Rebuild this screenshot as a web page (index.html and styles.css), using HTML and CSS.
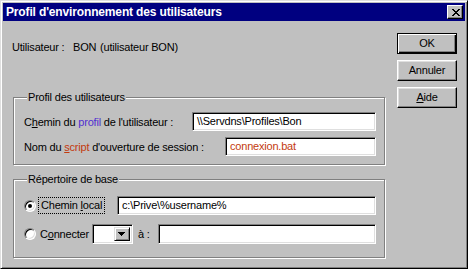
FILE: index.html
```html
<!DOCTYPE html>
<html>
<head>
    <title>Profil d'environnement des utilisateurs</title>
    <link rel="stylesheet" href="styles.css">
</head>
<body>
    <div class="dialog">
        <!-- Title bar -->
        <div class="titlebar">
            <span class="title">Profil d'environnement des utilisateurs</span>
            <span class="close-btn">
                <svg width="8" height="7" viewBox="0 0 8 7" shape-rendering="crispEdges"><path d="M0 0h2v1H0z M6 0h2v1H6z M1 1h2v1H1z M5 1h2v1H5z M2 2h4v1H2z M3 3h2v1H3z M2 4h4v1H2z M1 5h2v1H1z M5 5h2v1H5z M0 6h2v1H0z M6 6h2v1H6z" fill="#000"/></svg>
            </span>
        </div>

        <div class="body">
            <div class="main">
                <div class="user-line">
                    <span class="user-label">Utilisateur :</span>
                    <span class="user-name">BON</span>
                    <span>(utilisateur BON)</span>
                </div>

                <!-- Profile group -->
                <div class="group profile-group">
                    <div class="group-title">Profil des utilisateurs</div>
                    <div class="row first-row">
                        <span>C<u>h</u>emin du <span class="blue">profil</span> de l'utilisateur :</span>
                        <div class="field path-field">\\Servdns\Profiles\Bon</div>
                    </div>
                    <div class="row second-row">
                        <span>Nom du <span class="red"><u>s</u>cript</span> d'ouverture de session :</span>
                        <div class="field script-field red">connexion.bat</div>
                    </div>
                </div>

                <!-- Home directory group -->
                <div class="group home-group">
                    <div class="group-title">Répertoire de base</div>
                    <div class="row first-row">
                        <span class="radio checked"></span>
                        <span class="focus-label">Chemin <u>l</u>ocal</span>
                        <div class="field local-field">c:\Prive\%username%</div>
                    </div>
                    <div class="row second-row">
                        <span class="radio"></span>
                        <span class="radio-label">C<u>o</u>nnecter</span>
                        <div class="combo">
                            <span class="combo-btn">
                                <svg width="7" height="4" viewBox="0 0 7 4" shape-rendering="crispEdges"><path d="M0 0h7v1H0z M1 1h5v1H1z M2 2h3v1H2z M3 3h1v1H3z" fill="#000"/></svg>
                            </span>
                        </div>
                        <span class="to-label">à :</span>
                        <div class="field connect-field"></div>
                    </div>
                </div>
            </div>

            <div class="buttons">
                <div class="btn btn-default">OK</div>
                <div class="btn">Annuler</div>
                <div class="btn"><u>A</u>ide</div>
            </div>
        </div>
    </div>
</body>
</html>
```

FILE: styles.css
```css
body {
    margin: 0;
    background: #c0c0c0;
    font-family: "Liberation Sans", Arial, sans-serif;
    font-size: 11px;
    letter-spacing: -0.2px;
    color: #000;
}
.dialog {
    width: 468px;
    height: 269px;
    box-sizing: border-box;
    background: #c0c0c0;
    border: 1px solid;
    border-color: #dfdfdf #000 #000 #dfdfdf;
    box-shadow: inset 1px 1px #fff, inset -1px -1px #808080;
    padding: 2px;
}
.titlebar {
    height: 18px;
    background: #000080;
    display: flex;
    align-items: center;
    justify-content: space-between;
    padding: 0 2px 0 3px;
}
.title {
    color: #fff;
    font-weight: bold;
    font-size: 12px;
    letter-spacing: -0.15px;
}
.close-btn {
    width: 16px;
    height: 14px;
    box-sizing: border-box;
    background: #c0c0c0;
    border: 1px solid;
    border-color: #fff #000 #000 #fff;
    box-shadow: inset -1px -1px #808080;
    display: flex;
    align-items: center;
    justify-content: center;
    padding-left: 1px;
}
.body {
    display: flex;
}
.main {
    margin-left: 10px;
    width: 372px;
}
.user-line {
    margin: 20px 0 0 -1px;
    height: 13px;
    line-height: 13px;
    display: flex;
}
.user-label {
    width: 61px;
}
.user-name {
    width: 27px;
}
.group {
    box-sizing: border-box;
    width: 372px;
    border: 1px solid #808080;
    box-shadow: inset 1px 1px #fff, 1px 1px #fff;
    padding: 0 8px 0 10px;
}
.group-title {
    width: fit-content;
    height: 13px;
    margin: -7px 0 0 3px;
    padding: 0 1px;
    line-height: 13px;
    background: #c0c0c0;
}
.profile-group {
    margin-top: 43px;
    padding-bottom: 8px;
}
.home-group {
    margin-top: 14px;
    padding-bottom: 13px;
}
.row {
    display: flex;
    align-items: center;
    height: 19px;
    white-space: nowrap;
}
.profile-group .first-row {
    margin-top: 8px;
    justify-content: space-between;
}
.profile-group .second-row {
    margin-top: 6px;
    justify-content: space-between;
}
.home-group .first-row {
    margin-top: 10px;
}
.home-group .second-row {
    margin-top: 9px;
    height: 20px;
}
.field {
    box-sizing: border-box;
    height: 19px;
    background: #fff;
    border: 1px solid;
    border-color: #808080 #fff #fff #808080;
    box-shadow: inset 1px 1px #000, inset -1px -1px #dfdfdf;
    padding: 0 4px;
    line-height: 17px;
    white-space: nowrap;
    flex: none;
}
.path-field {
    width: 184px;
}
.script-field {
    width: 151px;
}
.local-field {
    width: 259px;
    margin-left: auto;
}
.connect-field {
    width: 218px;
    margin-left: auto;
    height: 20px;
}
.blue {
    color: #5030d0;
}
.red {
    color: #c33a0e;
}
.radio {
    width: 12px;
    height: 12px;
    box-sizing: border-box;
    border-radius: 50%;
    background: #fff;
    border: 1px solid;
    border-color: #808080 #fff #fff #808080;
    box-shadow: inset 1px 1px #000, inset -1px -1px #dfdfdf;
    display: flex;
    align-items: center;
    justify-content: center;
    flex: none;
}
.radio.checked::after {
    content: "";
    width: 4px;
    height: 4px;
    border-radius: 50%;
    background: #000;
}
.focus-label {
    margin-left: 2px;
    border: 1px dotted #000;
    padding: 1px 2px;
    line-height: 13px;
    flex: none;
}
.radio-label {
    margin-left: 4px;
}
.combo {
    box-sizing: border-box;
    width: 41px;
    height: 20px;
    margin-left: 3px;
    background: #fff;
    border: 1px solid;
    border-color: #808080 #fff #fff #808080;
    box-shadow: inset 1px 1px #000, inset -1px -1px #dfdfdf;
    display: flex;
    justify-content: flex-end;
    padding: 2px;
    flex: none;
}
.combo-btn {
    width: 16px;
    box-sizing: border-box;
    background: #c0c0c0;
    border: 1px solid;
    border-color: #dfdfdf #000 #000 #dfdfdf;
    box-shadow: inset 1px 1px #fff, inset -1px -1px #808080;
    display: flex;
    align-items: center;
    justify-content: center;
}
.to-label {
    margin-left: 5px;
}
.buttons {
    margin-left: 12px;
    margin-top: 12px;
    display: flex;
    flex-direction: column;
    gap: 6px;
}
.btn {
    width: 60px;
    height: 21px;
    box-sizing: border-box;
    border: 1px solid;
    border-color: #fff #000 #000 #fff;
    box-shadow: inset -1px -1px #808080, inset 1px 1px #dfdfdf;
    text-align: center;
    line-height: 19px;
}
.btn-default {
    border-color: #000;
    box-shadow: inset 1px 1px #fff, inset -1px -1px #000, inset -2px -2px #808080;
}
```
